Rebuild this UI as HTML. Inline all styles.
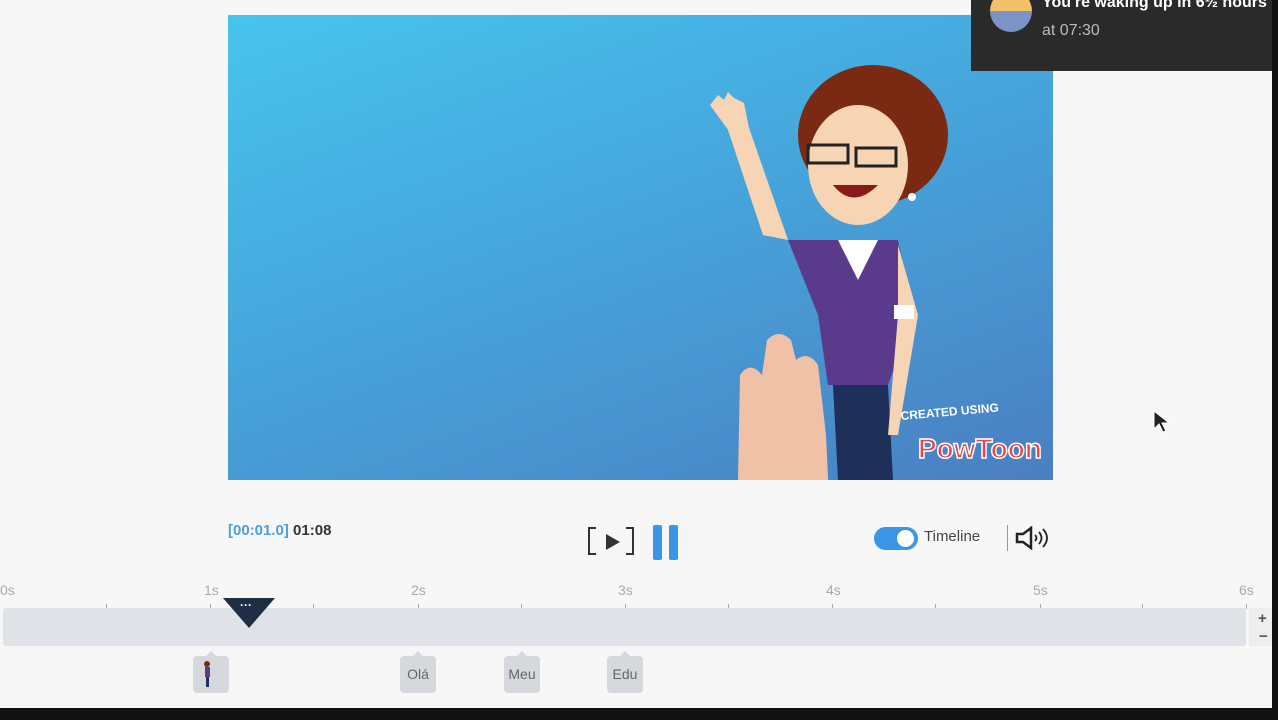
<!DOCTYPE html>
<html><head><meta charset="utf-8"><style>
*{margin:0;padding:0;box-sizing:border-box}
body{width:1278px;height:720px;background:#f7f7f7;position:relative;overflow:hidden;font-family:"Liberation Sans",sans-serif}
.a{position:absolute}
.video{left:228px;top:15px;width:825px;height:465px;background:linear-gradient(160deg,#47c4ee 0%,#46a6dc 45%,#4a7fc2 100%);overflow:hidden}
.tick{position:absolute;top:604px;width:1px;height:5px;background:#aaa}
.lbl{position:absolute;top:582px;font-size:14px;color:#aaa}
.tag{position:absolute;top:656px;width:36px;height:37px;background:#d5d8dc;border-radius:4px;font-size:14px;color:#666;text-align:center;line-height:36px}
.tag:before{content:"";position:absolute;left:13px;top:-5px;border:5px solid transparent;border-top:0;border-bottom:5px solid #d5d8dc}
</style></head><body>
<div class="a video">
<svg width="825" height="465" viewBox="0 0 825 465">
 <path d="M490 85 L535 220 L560 225 L520 110 Z" fill="#f6d4b4"/>
 <path d="M482 90 l8 -10 l6 5 l4-8 l6 6 l10 5 l5 25 l-15 10 Z" fill="#f6d4b4"/>
 <ellipse cx="645" cy="120" rx="75" ry="70" fill="#7a2a12"/>
 <ellipse cx="630" cy="150" rx="50" ry="60" fill="#f6d4b4"/>
 <rect x="580" y="130" width="40" height="18" fill="none" stroke="#222" stroke-width="3"/>
 <rect x="628" y="133" width="40" height="18" fill="none" stroke="#222" stroke-width="3"/>
 <path d="M605 170 q20 25 45 0 z" fill="#8a1a1a"/>
 <circle cx="684" cy="182" r="4" fill="#fff"/>
 <path d="M560 225 L670 225 L685 300 L660 370 L600 370 L590 300 Z" fill="#5a3a8a"/>
 <path d="M610 225 l20 40 l20 -40 z" fill="#fff"/>
 <path d="M605 370 L660 370 L665 465 L610 465 Z" fill="#1e2f5a"/>
 <path d="M670 230 L690 300 L670 420 L660 420 L670 300 Z" fill="#f6d4b4"/>
 <rect x="666" y="290" width="20" height="14" fill="#fff"/>
 <path d="M510 465 L512 360 q10 -15 22 0 l5 -35 q12 -12 24 0 l5 20 q12 -10 22 5 l8 70 l5 105 Z" fill="#f0c1a6"/>
 <text x="673" y="405" font-size="12" font-weight="bold" fill="#fff" transform="rotate(-5 673 405)" font-family="Liberation Sans">CREATED USING</text>
 <text x="690" y="443" font-size="28" font-weight="bold" fill="#e64545" stroke="#fff" stroke-width="1.5" font-family="Liberation Sans">PowToon</text>
</svg>
</div>
<div class="a" style="left:971px;top:0;width:301px;height:71px;background:#2a2a2a"></div>
<div class="a" style="left:990px;top:-10px;width:42px;height:42px;border-radius:50%;background:linear-gradient(#f5c06a 50%,#7b93c6 50%)"></div>
<div class="a" style="left:1042px;top:-6px;color:#fff;font-weight:bold;font-size:16px;white-space:nowrap">You're waking up in 6½ hours</div>
<div class="a" style="left:1042px;top:22px;color:#bbb;font-size:16px">at 07:30</div>
<div class="a" style="left:1272px;top:0;width:6px;height:720px;background:#111"></div>
<div class="a" style="left:0;top:708px;width:1278px;height:12px;background:#111"></div>

<div class="a" style="left:228px;top:522px;font-size:15px;font-weight:bold;color:#4a9fe0">[00:01.0] <span style="color:#333">01:08</span></div>
<div class="a" style="left:588px;top:527px;width:46px;height:28px;border:2px solid #333"></div>
<div class="a" style="left:596px;top:524px;width:30px;height:34px;background:#f7f7f7"></div>
<div class="a" style="left:606px;top:534px;border-left:14px solid #333;border-top:8px solid transparent;border-bottom:8px solid transparent"></div>
<div class="a" style="left:653px;top:525px;width:9px;height:35px;background:#3a96e8;border-radius:2px"></div>
<div class="a" style="left:669px;top:525px;width:9px;height:35px;background:#3a96e8;border-radius:2px"></div>
<div class="a" style="left:874px;top:527px;width:44px;height:23px;background:#3a96e8;border-radius:12px"></div>
<div class="a" style="left:897px;top:530px;width:17px;height:17px;background:#fff;border-radius:50%"></div>
<div class="a" style="left:924px;top:528px;font-size:15px;color:#444">Timeline</div>
<div class="a" style="left:1007px;top:525px;width:1px;height:26px;background:#999"></div>
<svg class="a" style="left:1015px;top:526px" width="40" height="24"><path d="M2 8h6l8-6v20l-8-6H2z" fill="none" stroke="#222" stroke-width="2.5"/><path d="M20 9q3 3 0 6M24 6q5 6 0 12M28 3q8 9 0 18" fill="none" stroke="#222" stroke-width="1.8"/></svg>

<div class="lbl" style="left:0">0s</div><div class="lbl" style="left:204px">1s</div><div class="lbl" style="left:411px">2s</div><div class="lbl" style="left:618px">3s</div><div class="lbl" style="left:826px">4s</div><div class="lbl" style="left:1033px">5s</div><div class="lbl" style="left:1239px">6s</div>
<div class="tick" style="left:106px"></div><div class="tick" style="left:210px"></div><div class="tick" style="left:313px"></div><div class="tick" style="left:418px"></div><div class="tick" style="left:521px"></div><div class="tick" style="left:625px"></div><div class="tick" style="left:728px"></div><div class="tick" style="left:832px"></div><div class="tick" style="left:935px"></div><div class="tick" style="left:1040px"></div><div class="tick" style="left:1142px"></div><div class="tick" style="left:1246px"></div>
<div class="a" style="left:3px;top:608px;width:1243px;height:38px;background:#dfe2e6;border-radius:3px"></div>
<div class="a" style="left:1249px;top:608px;width:23px;height:38px;background:#eceef0"></div>
<div class="a" style="left:1258px;top:610px;font-size:15px;font-weight:bold;color:#555">+</div>
<div class="a" style="left:1259px;top:628px;font-size:15px;font-weight:bold;color:#555">−</div>
<div class="a" style="left:223px;top:598px;border-top:30px solid #1f2e44;border-left:26px solid transparent;border-right:26px solid transparent"></div>
<div class="a" style="left:240px;top:598px;color:#fff;font-size:12px;font-weight:bold">···</div>
<div class="tag" style="left:193px"><svg width="36" height="36"><circle cx="14" cy="8" r="3" fill="#7a2a12"/><rect x="12" y="11" width="5" height="10" fill="#5a3a8a"/><rect x="13" y="21" width="3" height="10" fill="#1e2f5a"/></svg></div>
<div class="tag" style="left:400px">Olá</div>
<div class="tag" style="left:504px">Meu</div>
<div class="tag" style="left:607px">Edu</div>
<svg class="a" style="left:1153px;top:410px" width="16" height="24"><path d="M1 1v18l5-5 4 8 3-1-4-8h7z" fill="#222" stroke="#fff" stroke-width="1"/></svg>
</body></html>
